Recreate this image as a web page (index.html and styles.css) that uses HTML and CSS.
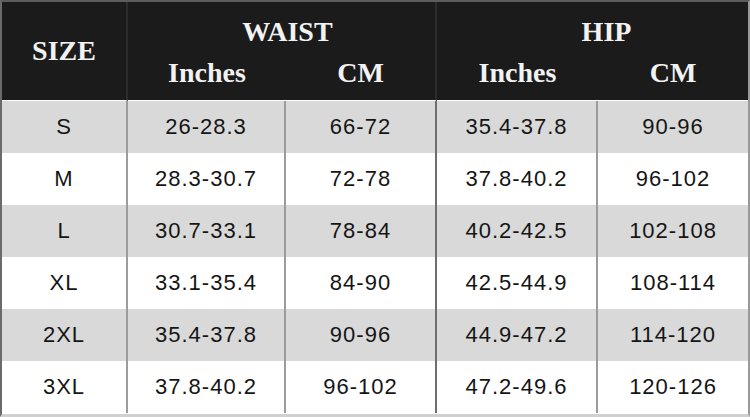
FILE: index.html
```html
<!DOCTYPE html>
<html>
<head>
<meta charset="utf-8">
<link rel="stylesheet" href="styles.css">
</head>
<body>
<div class="chart">
  <div class="hcell size">SIZE</div>
  <div class="hcell group waist">WAIST</div>
  <div class="hcell group hip">HIP</div>
  <div class="hcell sub c2">Inches</div>
  <div class="hcell sub c3">CM</div>
  <div class="hcell sub c4">Inches</div>
  <div class="hcell sub c5">CM</div>

  <div class="cell g c1">S</div><div class="cell g">26-28.3</div><div class="cell g c3">66-72</div><div class="cell g">35.4-37.8</div><div class="cell g c5">90-96</div>
  <div class="cell c1">M</div><div class="cell">28.3-30.7</div><div class="cell c3">72-78</div><div class="cell">37.8-40.2</div><div class="cell c5">96-102</div>
  <div class="cell g c1">L</div><div class="cell g">30.7-33.1</div><div class="cell g c3">78-84</div><div class="cell g">40.2-42.5</div><div class="cell g c5">102-108</div>
  <div class="cell c1">XL</div><div class="cell">33.1-35.4</div><div class="cell c3">84-90</div><div class="cell">42.5-44.9</div><div class="cell c5">108-114</div>
  <div class="cell g c1">2XL</div><div class="cell g">35.4-37.8</div><div class="cell g c3">90-96</div><div class="cell g">44.9-47.2</div><div class="cell g c5">114-120</div>
  <div class="cell c1">3XL</div><div class="cell">37.8-40.2</div><div class="cell c3">96-102</div><div class="cell">47.2-49.6</div><div class="cell c5">120-126</div>
</div>
</body>
</html>
```

FILE: styles.css
```css
html, body {
  margin: 0;
  padding: 0;
  background: #ffffff;
}
.chart {
  width: 750px;
  height: 417px;
  box-sizing: border-box;
  border-left: 2px solid #6a6a6a;
  border-right: 2px solid #9a9a9a;
  border-top: 2px solid #5c5c5c;
  border-bottom: 3px solid #d0d0d0;
  display: grid;
  grid-template-columns: 126px 158px 151px 161px 150px;
  grid-template-rows: 50px 49px repeat(6, 52px);
  background: #ffffff;
}
.hcell {
  background: #1b1b1b;
  color: #f2f2f2;
  font-family: "Liberation Serif", "Times New Roman", serif;
  font-size: 28px;
  font-weight: bold;
  display: flex;
  align-items: center;
  justify-content: center;
}
.size {
  grid-row: 1 / span 2;
  grid-column: 1;
  border-right: 2px solid #2c2c2c;
  border-bottom: 1px solid #ffffff;
}
.group {
  padding-top: 10px;
}
.waist {
  grid-column: 2 / span 2;
  border-right: 2px solid #2c2c2c;
  padding-left: 12px;
}
.hip {
  grid-column: 4 / span 2;
  padding-left: 28px;
}
.sub {
  border-bottom: 1px solid #ffffff;
  padding-bottom: 6px;
}
.c3.sub {
  border-right: 2px solid #2c2c2c;
}
.cell {
  font-family: "Liberation Sans", Arial, sans-serif;
  font-size: 22px;
  letter-spacing: 1px;
  color: #151515;
  display: flex;
  align-items: center;
  justify-content: center;
  border-right: 2px solid #9c9c9c;
  background: #ffffff;
}
.cell.g {
  background: #d9d9d9;
}
.cell.c3 {
  border-right-color: #6e6e6e;
}
.cell.c5 {
  border-right: none;
}
```
